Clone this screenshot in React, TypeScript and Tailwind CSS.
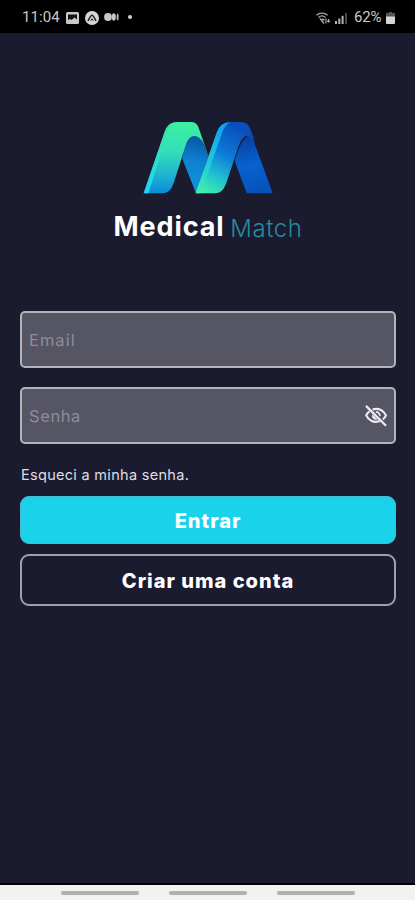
import React from 'react';

function StatusBar() {
  return (
    <header className="h-[33px] shrink-0 bg-black flex items-center justify-between pl-[22px] pr-[20px] pt-[2px] text-[#c8c8c8] font-['Roboto',sans-serif] text-[15px]">
      <div className="flex items-center">
        <span className="w-[38px] whitespace-nowrap tracking-[0.1px]">11:04</span>
        {/* Gallery */}
        <svg className="ml-[6px] w-[13px] h-[12px]" viewBox="0 0 13 12">
          <rect width="13" height="12" rx="1.5" fill="#c8c8c8" />
          <path d="M2 2.5h9v5l-2.5-2L5.5 8 4 6.7 2 8.3z" fill="#111" />
          <path d="M3 9.5l2-1.6 1 .8 3-2.2 2 2v1z" fill="#c8c8c8" />
        </svg>
        {/* App notification */}
        <svg className="ml-[6px] w-[14px] h-[14px]" viewBox="0 0 14 14">
          <circle cx="7" cy="7" r="7" fill="#d6d6d6" />
          <path d="M3 9.8C4 8 5.6 4.2 7 4.2S10 8 11 9.8" fill="none" stroke="#222" strokeWidth="1.5" />
          <path d="M5.6 9.8L7 7.8l1.4 2" fill="none" stroke="#222" strokeWidth="1" />
        </svg>
        <svg className="ml-[5px] w-[15px] h-[8px] -mt-[2px]" viewBox="0 0 15 8">
          <circle cx="4" cy="4" r="3.9" fill="#c8c8c8" />
          <ellipse cx="9.8" cy="4" rx="2" ry="3.7" fill="#c8c8c8" />
          <ellipse cx="13.6" cy="4" rx="1" ry="3.5" fill="#b8b8b8" />
        </svg>
        <span className="ml-[9px] -mt-[2px] w-[4px] h-[4px] rounded-full bg-[#d0d0d0]" />
      </div>
      <div className="flex items-center">
        {/* Wi-Fi */}
        <svg className="mr-[1px] w-[15px] h-[12px]" viewBox="0 0 15 12" fill="none" stroke="#aaa">
          <path d="M.5 3.3C3.7.3 8.3.3 11.5 3.3M2.5 5.4c2.2-2 4.8-2 7 0" strokeWidth="1.3" />
          <path d="M4 6.5l4 5M6 7l2.4 1" strokeWidth="1.4" />
          <path d="M10 6.5v5M12.5 7v3M11.3 8.8l1.2 1.2 1.5-1.3" strokeWidth="1.2" />
        </svg>
        {/* Signal */}
        <svg className="ml-[3px] w-[12px] h-[12px]" viewBox="0 0 12 12" fill="#b4b4b4">
          <rect y="9" width="2" height="3" />
          <rect x="3.3" y="6.5" width="2" height="5.5" />
          <rect x="6.6" y="3.8" width="2" height="8.2" />
          <rect x="10" y="1" width="2" height="11" fill="#484848" />
        </svg>
        <span className="ml-[7px] w-[29px] whitespace-nowrap tracking-[-0.2px]">62%</span>
        {/* Battery */}
        <svg className="ml-[3px] w-[9px] h-[12px]" viewBox="0 0 9 12">
          <path d="M3 0h3v1h3v4H0V1h3z" fill="#555" />
          <path d="M0 4.5h9V11a1 1 0 0 1-1 1H1a1 1 0 0 1-1-1z" fill="#d6d6d6" />
        </svg>
      </div>
    </header>
  );
}

function Logo() {
  return (
    <svg className="ml-[5px] w-[150px] h-[95px]" viewBox="0 0 450 285">
      <defs>
        <linearGradient id="left" x1="120" y1="40" x2="115" y2="250" gradientUnits="userSpaceOnUse">
          <stop offset="0" stopColor="#3df0a0" />
          <stop offset="0.4" stopColor="#33deb8" />
          <stop offset="0.75" stopColor="#1fb2d0" />
          <stop offset="1" stopColor="#0b8bdc" />
        </linearGradient>
        <linearGradient id="leftEdge" x1="100" y1="50" x2="35" y2="250" gradientUnits="userSpaceOnUse">
          <stop offset="0" stopColor="#35e8a8" />
          <stop offset="1" stopColor="#22d4f2" />
        </linearGradient>
        <linearGradient id="inner" x1="190" y1="85" x2="160" y2="220" gradientUnits="userSpaceOnUse">
          <stop offset="0" stopColor="#0758a8" />
          <stop offset="0.5" stopColor="#0d82d0" />
          <stop offset="1" stopColor="#108fdc" />
        </linearGradient>
        <linearGradient id="mid" x1="320" y1="60" x2="215" y2="250" gradientUnits="userSpaceOnUse">
          <stop offset="0" stopColor="#0a4fbc" />
          <stop offset="0.4" stopColor="#0c7bd8" />
          <stop offset="0.72" stopColor="#20bfd0" />
          <stop offset="1" stopColor="#40efaa" />
        </linearGradient>
        <linearGradient id="midEdge" x1="275" y1="45" x2="190" y2="250" gradientUnits="userSpaceOnUse">
          <stop offset="0" stopColor="#10a0ee" />
          <stop offset="0.6" stopColor="#22ccd8" />
          <stop offset="1" stopColor="#42f0a8" />
        </linearGradient>
        <linearGradient id="right" x1="330" y1="80" x2="370" y2="250" gradientUnits="userSpaceOnUse">
          <stop offset="0" stopColor="#0640a0" />
          <stop offset="0.5" stopColor="#0763cf" />
          <stop offset="1" stopColor="#0750b8" />
        </linearGradient>
      </defs>
      <path d="M142 146Q155 80 178 78L194 78L220 137L183 250Z" fill="url(#inner)" />
      <path d="M299 152Q320 80 345 76L352 82L413 250H335Z" fill="url(#right)" />
      <path d="M26 250L89 66Q99 36 125 36H168Q184 36 190 51L220 137L206 102Q195 78 178 78Q160 79 151 110L116 219Q106 250 82 250Z" fill="url(#left)" />
      <path d="M26 250L89 66Q99 36 125 36Q106 43 98 68L40 250Z" fill="url(#leftEdge)" />
      <path d="M182 250L245 68Q256 36 286 36H318Q337 36 345 55L360 96Q350 76 336 77Q321 80 310 110L274 219Q263 250 240 250Z" fill="url(#mid)" />
      <path d="M182 250L245 68Q256 36 286 36Q270 43 260 72L198 250Z" fill="url(#midEdge)" />
    </svg>
  );
}

function EyeOff() {
  return (
    <svg className="w-[24px] h-[24px]" viewBox="0 0 24 24" fill="none" stroke="#ececf2" strokeWidth="2.1">
      <path d="M8.6 5.5C15 3.4 20 7 22 11.4c-.7 1.6-1.8 3-3.2 4.1M16 17.1C10 19.2 4.5 16.5 2.2 11.4 2.9 9.8 4 8.4 5.4 7.3" />
      <path d="M11.8 7.9a3.9 3.9 0 0 1 4.1 4.2" strokeWidth="1.7" />
      <path d="M8.3 10.2a4 4 0 0 0 5.3 5.2z" fill="#ececf2" stroke="none" />
      <path d="M2 1.9L22 21.7" strokeWidth="2.2" />
    </svg>
  );
}

export default function App() {
  return (
    <main className="h-[900px] w-full bg-[#1b1b2f] flex flex-col overflow-hidden font-['Inter',sans-serif]">
      <StatusBar />

      <section className="mt-[77px] flex flex-col items-center">
        <Logo />
        <h1 className="mt-[4px] w-[188px] h-[36px] flex items-center justify-between whitespace-nowrap">
          <span className="text-white font-bold text-[27px] tracking-[0.9px]">Medical</span>
          <span className="text-[#29899f] font-light text-[24px] tracking-[0.6px] mt-[3px] -mr-[1px]">Match</span>
        </h1>
      </section>

      <form className="mt-[66px] pl-[20px] pr-[19px] flex flex-col">
        <div className="h-[57px] rounded-[5px] border-2 border-[#b3b3b8] bg-[#555564] flex items-center px-[7px]">
          <span className="pt-[2px] text-[#8d8d98] text-[16.5px] tracking-[1px]">Email</span>
        </div>
        <div className="mt-[19px] h-[57px] rounded-[5px] border-2 border-[#b3b3b8] bg-[#555564] flex items-center justify-between pl-[7px] pr-[6px]">
          <span className="pt-[2px] text-[#8d8d98] text-[16.5px] tracking-[0.6px]">Senha</span>
          <EyeOff />
        </div>

        <a className="mt-[20px] h-[22px] pl-[1px] text-[#dedee2] text-[14.5px] leading-[22px] tracking-[0.3px] whitespace-nowrap">
          Esqueci a minha senha.
        </a>

        <button type="button" className="mt-[10px] h-[48px] pt-[2px] rounded-[9px] border border-[#4cb8cb] bg-[#1bd2eb] text-white text-[20px] font-extrabold tracking-[1px]">
          Entrar
        </button>
        <button type="button" className="mt-[10px] h-[52px] pt-[2px] rounded-[9px] border-2 border-[#a2a1ab] text-white text-[20px] font-extrabold tracking-[1px]">
          Criar uma conta
        </button>
      </form>

      {/* Gesture bar */}
      <footer className="mt-auto h-[17px] shrink-0 border-t-2 border-black bg-[#f2f2f3] flex justify-center gap-[30px] pt-[6px] pl-[1px]">
        <span className="w-[78px] h-[4px] rounded-full bg-[#b0b0b0]" />
        <span className="w-[78px] h-[4px] rounded-full bg-[#b0b0b0]" />
        <span className="w-[78px] h-[4px] rounded-full bg-[#b0b0b0]" />
      </footer>
    </main>
  );
}
